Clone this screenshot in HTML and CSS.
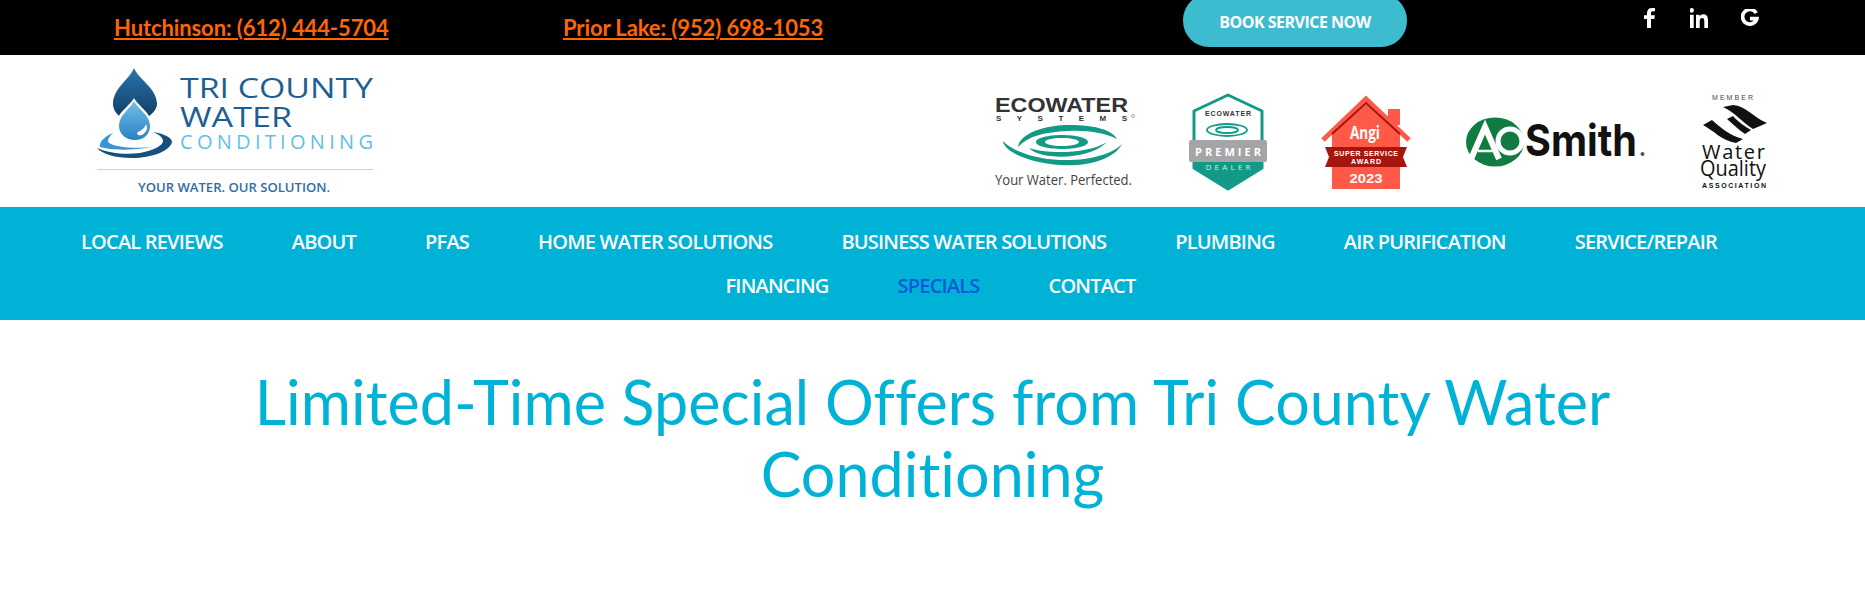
FILE: index.html
```html
<!DOCTYPE html>
<html lang="en">

<head>
    <meta charset="UTF-8">
    <meta name="viewport" content="width=device-width, initial-scale=1.0">
    <title>Specials | Tri County Water Conditioning</title>
    <link rel="stylesheet" href="styles.css">
</head>

<body>
    <div class="topbar">
        <a class="phone phone-hutch" href="#">Hutchinson: (612) 444-5704</a>
        <a class="phone phone-prior" href="#">Prior Lake: (952) 698-1053</a>
        <a class="book-btn" href="#">BOOK SERVICE NOW</a>
        <div class="social">
            <a href="#" aria-label="Facebook">
                <svg width="14" height="20" viewBox="0 0 14 22" preserveAspectRatio="none"><path fill="#fff" d="M4 22V12H1V8h3V5.500C4 2 6 0 9 0c1.300 0 2.500.100 3 .2v3.500h-2C8.500 3.700 8 4.500 8 5.700V8h3.900l-.6 4H8v10z"/></svg>
            </a>
            <a href="#" aria-label="LinkedIn">
                <svg width="18" height="20" viewBox="0 0 18 18" preserveAspectRatio="none"><path fill="#fff" d="M0 6h3.700v12H0zM1.850 0a2.100 2.100 0 1 1 0 4.200 2.100 2.100 0 0 1 0-4.200zM6 6h3.500v1.700C10.100 6.600 11.500 5.700 13.300 5.700c3.500 0 4.700 2.200 4.700 5.600V18h-3.700v-6c0-1.700-.4-3-2.100-3-1.800 0-2.500 1.300-2.500 3v6H6z"/></svg>
            </a>
            <a href="#" aria-label="Google">
                <svg width="18" height="18" viewBox="0 0 18 18"><path fill="none" stroke="#fff" stroke-width="3.600" d="M15.200 4.100A7.300 7.300 0 1 0 16 9.600H9"/></svg>
            </a>
        </div>
    </div>

    <header class="site-header">
        <a class="logo" href="#" aria-label="Tri County Water Conditioning">
            <svg width="285" height="132" viewBox="90 65 285 132">
                <defs>
                    <linearGradient id="dropDark" x1="0" y1="0" x2="0" y2="1">
                        <stop offset="0" stop-color="#2a76ad"/>
                        <stop offset="1" stop-color="#103a62"/>
                    </linearGradient>
                    <linearGradient id="dropLight" x1="0" y1="0" x2="0" y2="1">
                        <stop offset="0" stop-color="#74bfe8"/>
                        <stop offset="1" stop-color="#2a82c4"/>
                    </linearGradient>
                </defs>
                <path fill="url(#dropDark)" d="M134 68C130 79 113 88 113 104C113 110 117 115 124 120H144C151 115 157 110 157 104C157 88 138 79 134 68Z"/>
                <path fill="#fff" d="M134 98C129 107 116 113 116 126L152 126C152 113 139 107 134 98Z"/>
                <path fill="url(#dropLight)" d="M134 101C130 109 119 115 119 126C119 134 126 140 135 140C144 140 150 134 150 126C150 115 138 109 134 101Z"/>
                <path fill="#fff" d="M146 124C148 128 147 132 142 135C138 136 136 134 138 132C142 130 145 128 146 124Z"/>
                <path fill="#3a96d2" d="M113 133C103 137 99 143 100 147C110 150 130 151 152 147C135 149 112 147 108 142C108 138 110 136 113 133Z"/>
                <path fill="#16507f" d="M153 132C165 134 172 138 172 142C170 151 152 158 132 158C115 158 102 154 97 148C108 153 125 155 140 153C155 150 163 145 163 141C163 137 158 134 153 132Z"/>
                <text class="logo-name" x="180" y="98" textLength="193" lengthAdjust="spacingAndGlyphs">TRI COUNTY</text>
                <text class="logo-name" x="180" y="127" textLength="112" lengthAdjust="spacingAndGlyphs">WATER</text>
                <text class="logo-sub" x="180" y="149" textLength="193">CONDITIONING</text>
                <rect x="97" y="169" width="276" height="1" fill="#bcd9e8"/>
                <text class="logo-tag" x="138" y="192" textLength="192" lengthAdjust="spacingAndGlyphs">YOUR WATER. OUR SOLUTION.</text>
            </svg>
        </a>

        <div class="brands">
            <svg width="142" height="98" viewBox="995 93 142 98" role="img" aria-label="EcoWater Systems">
                <text class="eco-name" x="995" y="112" textLength="133" lengthAdjust="spacingAndGlyphs">ECOWATER</text>
                <text class="eco-sys" x="996" y="120.500" textLength="131">SYSTEMS</text>
                <circle cx="1133" cy="116" r="1.500" fill="none" stroke="#777" stroke-width=".6"/>
                <g fill="#129a86">
                    <path d="M1018 147C1020 133 1045 125 1070 125C1095 125 1112 130 1117 139C1105 133 1088 130 1068 131C1045 132 1028 136 1018 147Z"/>
                    <path d="M1003 141C1004 152 1030 163 1060 165C1090 167 1115 158 1122 144C1112 154 1090 161 1060 160C1035 159 1012 151 1003 141Z"/>
                    <path d="M1029 148C1040 160 1088 161 1107 142C1090 153 1050 155 1029 148Z"/>
                    <path fill-rule="evenodd" d="M1062 135C1076 135 1088 138 1088 142C1088 146 1076 149 1062 149C1048 149 1036 146 1036 142C1036 138 1048 135 1062 135ZM1062 138C1052 138 1045 140 1045 142C1045 144 1052 146 1062 146C1072 146 1079 144 1079 142C1079 140 1072 138 1062 138Z"/>
                </g>
                <text class="eco-tag" x="995" y="185" textLength="137" lengthAdjust="spacingAndGlyphs">Your Water. Perfected.</text>
            </svg>

            <svg width="79" height="98" viewBox="1189 93 79 98" role="img" aria-label="EcoWater Premier Dealer">
                <path fill="#fff" stroke="#129a86" stroke-width="3" stroke-linejoin="round" d="M1228 95L1262 111V168L1228 189L1194 168V111Z"/>
                <path fill="#129a86" d="M1194 160H1262V168L1228 189L1194 168Z"/>
                <text class="prem-eco" x="1228" y="116" text-anchor="middle" textLength="46">ECOWATER</text>
                <g fill="none" stroke="#129a86" stroke-width="1.800">
                    <ellipse cx="1227" cy="130" rx="20" ry="6"/>
                    <ellipse cx="1227" cy="130" rx="11" ry="3"/>
                </g>
                <rect x="1189" y="140" width="78" height="22" rx="2" fill="#a3a5a7"/>
                <text class="prem-main" x="1228" y="155.500" text-anchor="middle" textLength="66">PREMIER</text>
                <text class="prem-deal" x="1228" y="170" text-anchor="middle" textLength="45">DEALER</text>
            </svg>

            <svg width="93" height="98" viewBox="1320 93 93 98" role="img" aria-label="Angi Super Service Award 2023">
                <path fill="#ff5a48" d="M1388 109H1400V125H1388Z"/>
                <path fill="#ff5a48" d="M1332 132L1366 104L1400 132V189H1332Z"/>
                <path fill="none" stroke="#ff5a48" stroke-width="5" d="M1323 140L1366 99L1409 140"/>
                <path fill="none" stroke="#a5160f" stroke-width="2" d="M1332 134L1366 103L1400 134"/>
                <text class="angi-name" x="1365" y="139" text-anchor="middle" textLength="30" lengthAdjust="spacingAndGlyphs">Angi</text>
                <path fill="#a5160f" d="M1325 147H1407L1403 157L1407 167H1325L1329 157Z"/>
                <text class="angi-award" x="1366" y="156" text-anchor="middle" textLength="64">SUPER SERVICE</text>
                <text class="angi-award" x="1366" y="164" text-anchor="middle" textLength="30">AWARD</text>
                <text class="angi-year" x="1366" y="183" text-anchor="middle" textLength="33" lengthAdjust="spacingAndGlyphs">2023</text>
            </svg>

            <svg width="180" height="98" viewBox="1465 93 180 98" role="img" aria-label="A. O. Smith">
                <ellipse cx="1495" cy="142" rx="29" ry="24.500" fill="#107c41"/>
                <path fill="none" stroke="#fff" stroke-width="6" d="M1471 159L1485 127L1499 159"/>
                <path fill="none" stroke="#fff" stroke-width="2.500" d="M1478 151H1494"/>
                <circle cx="1510" cy="141" r="12" fill="none" stroke="#fff" stroke-width="5"/>
                <text class="ao-smith" x="1525" y="156" textLength="112" lengthAdjust="spacingAndGlyphs">Smith</text>
                <circle cx="1642.500" cy="154" r="2" fill="#555"/>
            </svg>

            <svg width="73" height="98" viewBox="1697 93 73 98" role="img" aria-label="Member Water Quality Association">
                <text class="wqa-member" x="1712" y="100" textLength="41">MEMBER</text>
                <path fill="#111" d="M1723 107L1733 105C1746 106 1754 118 1767 123L1753 129C1744 124 1736 113 1723 107Z"/>
                <path fill="#111" d="M1727 119L1733 116C1738 122 1746 127 1751 130L1745 134C1739 130 1733 124 1727 119Z"/>
                <path fill="#111" d="M1703 125L1712 120C1720 127 1730 136 1743 139L1736 143C1722 141 1713 130 1703 125Z"/>
                <text class="wqa-name" x="1702" y="159" textLength="63">Water</text>
                <text class="wqa-quality" x="1700" y="176" textLength="66" lengthAdjust="spacingAndGlyphs">Quality</text>
                <text class="wqa-assoc" x="1702" y="188" textLength="64">ASSOCIATION</text>
            </svg>
        </div>
    </header>

    <nav class="main-nav">
        <ul class="nav-row nav-row-first">
            <li><a href="#">LOCAL REVIEWS</a></li>
            <li><a href="#">ABOUT</a></li>
            <li><a href="#">PFAS</a></li>
            <li><a href="#">HOME WATER SOLUTIONS</a></li>
            <li><a href="#">BUSINESS WATER SOLUTIONS</a></li>
            <li><a href="#">PLUMBING</a></li>
            <li><a href="#">AIR PURIFICATION</a></li>
            <li><a href="#">SERVICE/REPAIR</a></li>
        </ul>
        <ul class="nav-row nav-row-second">
            <li><a href="#">FINANCING</a></li>
            <li><a class="current" href="#">SPECIALS</a></li>
            <li><a href="#">CONTACT</a></li>
        </ul>
    </nav>

    <section class="intro">
        <h1>Limited-Time Special Offers from Tri County Water Conditioning</h1>
    </section>
</body>

</html>
```

FILE: styles.css
```css
* {
    margin: 0;
    padding: 0;
    box-sizing: border-box;
}

body {
    background-color: #fff;
    font-family: "Open Sans", sans-serif;
}

svg {
    display: block;
}

/* top black bar */
.topbar {
    display: flex;
    height: 55px;
    padding-left: 114px;
    background-color: #000;
    overflow: hidden;
}

.phone {
    margin-top: 14px;
    font-family: "Lato", sans-serif;
    font-size: 22px;
    line-height: 28px;
    font-weight: 700;
    letter-spacing: -0.1px;
    color: #ff6600;
    white-space: nowrap;
}

.phone-hutch {
    width: 449px;
}

.phone-prior {
    width: 620px;
}

.book-btn {
    width: 224px;
    height: 53px;
    margin-top: -6px;
    padding-top: 5px;
    border-radius: 26px;
    background-color: #3cbcce;
    color: #fff;
    font-size: 16px;
    line-height: 46px;
    font-weight: 700;
    letter-spacing: -0.5px;
    text-align: center;
    text-decoration: none;
}

.social {
    display: flex;
    gap: 33px;
    margin-left: 236px;
    margin-top: 8px;
    height: 20px;
    align-items: center;
}

/* logos row */
.site-header {
    display: flex;
    height: 152px;
    padding-left: 90px;
    background-color: #fff;
}

.logo {
    margin-top: 10px;
}

.brands {
    display: flex;
    gap: 52px;
    margin-left: 620px;
    margin-top: 38px;
}

.logo-name {
    font-family: "Open Sans", sans-serif;
    font-size: 28px;
    fill: #1d5f95;
}

.logo-sub {
    font-family: "Open Sans", sans-serif;
    font-size: 20px;
    fill: #62bfe2;
}

.logo-tag {
    font-family: "Open Sans", sans-serif;
    font-size: 12.500px;
    font-weight: 600;
    fill: #2e6ea3;
}

.eco-name {
    font-family: "Liberation Sans", sans-serif;
    font-size: 20px;
    font-weight: 700;
    fill: #333;
}

.eco-sys {
    font-family: "Liberation Sans", sans-serif;
    font-size: 8px;
    font-weight: 700;
    fill: #333;
}

.eco-tag {
    font-family: "Open Sans", sans-serif;
    font-size: 15px;
    fill: #444;
}

.prem-eco {
    font-family: "Liberation Sans", sans-serif;
    font-size: 7px;
    font-weight: 700;
    fill: #333;
}

.prem-main {
    font-family: "Open Sans", sans-serif;
    font-size: 11px;
    font-weight: 700;
    fill: #fff;
}

.prem-deal {
    font-family: "Open Sans", sans-serif;
    font-size: 8px;
    fill: #cdeee8;
}

.angi-name {
    font-family: "Open Sans", sans-serif;
    font-size: 18px;
    font-weight: 700;
    fill: #fff;
}

.angi-award {
    font-family: "Liberation Sans", sans-serif;
    font-size: 7px;
    font-weight: 700;
    fill: #fff;
}

.angi-year {
    font-family: "Liberation Sans", sans-serif;
    font-size: 13px;
    font-weight: 700;
    fill: #fff;
}

.ao-smith {
    font-family: "Inter", sans-serif;
    font-size: 44px;
    font-weight: 700;
    fill: #111;
}

.wqa-member {
    font-family: "Liberation Sans", sans-serif;
    font-size: 7px;
    fill: #444;
}

.wqa-name {
    font-family: "Open Sans", sans-serif;
    font-size: 20px;
    fill: #111;
}

.wqa-quality {
    font-family: "Open Sans", sans-serif;
    font-size: 21px;
    fill: #111;
}

.wqa-assoc {
    font-family: "Liberation Sans", sans-serif;
    font-size: 7px;
    font-weight: 700;
    fill: #111;
}

/* main menu */
.main-nav {
    height: 113px;
    padding-top: 13px;
    background-color: #00b2d6;
}

.nav-row {
    display: flex;
    justify-content: center;
    gap: 69px;
    list-style: none;
    height: 44px;
}

.nav-row-first {
    padding-right: 67px;
}

.nav-row-second {
    padding-right: 4px;
}

.nav-row a {
    font-size: 20px;
    line-height: 44px;
    font-weight: 600;
    letter-spacing: -0.8px;
    color: #fff;
    text-decoration: none;
    white-space: nowrap;
}

.nav-row a.current {
    color: #0c5adb;
}

/* page title */
.intro {
    padding: 46px 240px 0;
}

h1 {
    font-family: "Lato", sans-serif;
    font-size: 61px;
    line-height: 72px;
    font-weight: 400;
    letter-spacing: 0.05px;
    color: #00b2d6;
    text-align: center;
}
```
